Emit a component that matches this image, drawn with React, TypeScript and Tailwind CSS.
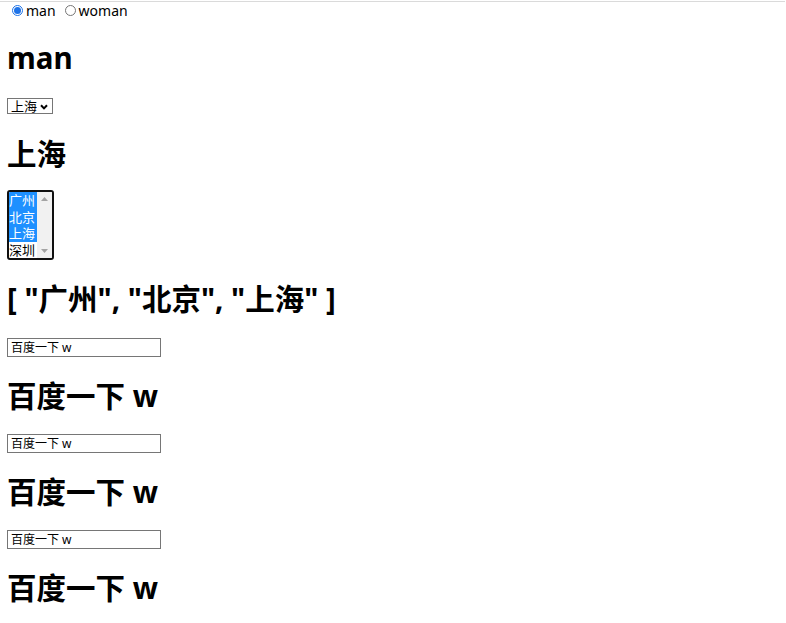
import { useState } from "react";

const cities = ["广州", "北京", "上海", "深圳"];

const font = "font-['Noto_Sans','Noto_Sans_CJK_SC',sans-serif]";

function Heading({ children }: { children: React.ReactNode }) {
  return (
    <h1 className={`h-10 text-[29.5px] font-bold leading-10 text-black ${font}`}>
      {children}
    </h1>
  );
}

function TextBox({ value }: { value: string }) {
  return (
    <div className="flex h-[19px] w-[154px] items-center border border-[#767676] bg-white px-[3px] text-[12px] leading-none text-black">
      {value}
    </div>
  );
}

export default function App() {
  const [sex] = useState("man");
  const [city] = useState("上海");
  const [picked] = useState(["广州", "北京", "上海"]);
  const [word] = useState("百度一下 w");

  return (
    <div className={`min-h-[623px] bg-white pt-px text-black ${font}`}>
      <div className="h-px w-[785px] bg-[#dadada]" />

      <div className="flex h-[17px] items-center pl-3 text-[14px] leading-none">
        <span className="flex h-[11px] w-[11px] items-center justify-center rounded-full border border-[#1e73e8]">
          <span className="h-[7px] w-[7px] rounded-full bg-[#1e73e8]" />
        </span>
        <span className="ml-[3px]">man</span>
        <span className="ml-[9px] h-[11px] w-[11px] rounded-full border border-[#767676]" />
        <span className="ml-[3px]">woman</span>
      </div>

      <div className="pl-[7px]">
        <div className="mt-[19px]">
          <Heading>{sex}</Heading>
        </div>

        <div className="mt-[20px] flex h-4 w-[46px] items-center justify-between border border-[#767676] pl-[3px] pr-[4px] text-[13px] leading-none">
          <span>{city}</span>
          <svg width="8" height="6" viewBox="0 0 8 6" className="mt-px">
            <path d="M1 1.2 4 4.4 7 1.2" fill="none" stroke="#000" strokeWidth="2" />
          </svg>
        </div>

        <div className="mt-[20px]">
          <Heading>{city}</Heading>
        </div>

        <div className="mt-[16px] flex h-[70px] w-[47px] overflow-hidden rounded-[3px] border-2 border-[#101010] bg-white text-[13px]">
          <div className="flex w-[28px] flex-col">
            {cities.map((c) => (
              <div
                key={c}
                className={`h-[16.5px] shrink-0 leading-[16px] ${
                  picked.includes(c) ? "bg-[#1e90ff] text-white" : "text-black"
                }`}
              >
                {c}
              </div>
            ))}
          </div>
          <div className="flex w-[15px] flex-col items-center justify-between bg-[#f1f1f1] py-[5px]">
            <svg width="7" height="4" viewBox="0 0 7 4">
              <path d="M0 4 3.5 0 7 4Z" fill="#a3a3a3" />
            </svg>
            <svg width="7" height="4" viewBox="0 0 7 4">
              <path d="M0 0 3.5 4 7 0Z" fill="#a3a3a3" />
            </svg>
          </div>
        </div>

        <div className="mt-[19px]">
          <Heading>[ {picked.map((p) => `"${p}"`).join(", ")} ]</Heading>
        </div>

        {[0, 1, 2].map((i) => (
          <div key={i}>
            <div className={i === 0 ? "mt-[19px]" : "mt-[18px]"}>
              <TextBox value={word} />
            </div>
            <div className="mt-[19px]">
              <Heading>{word}</Heading>
            </div>
          </div>
        ))}
      </div>
    </div>
  );
}
